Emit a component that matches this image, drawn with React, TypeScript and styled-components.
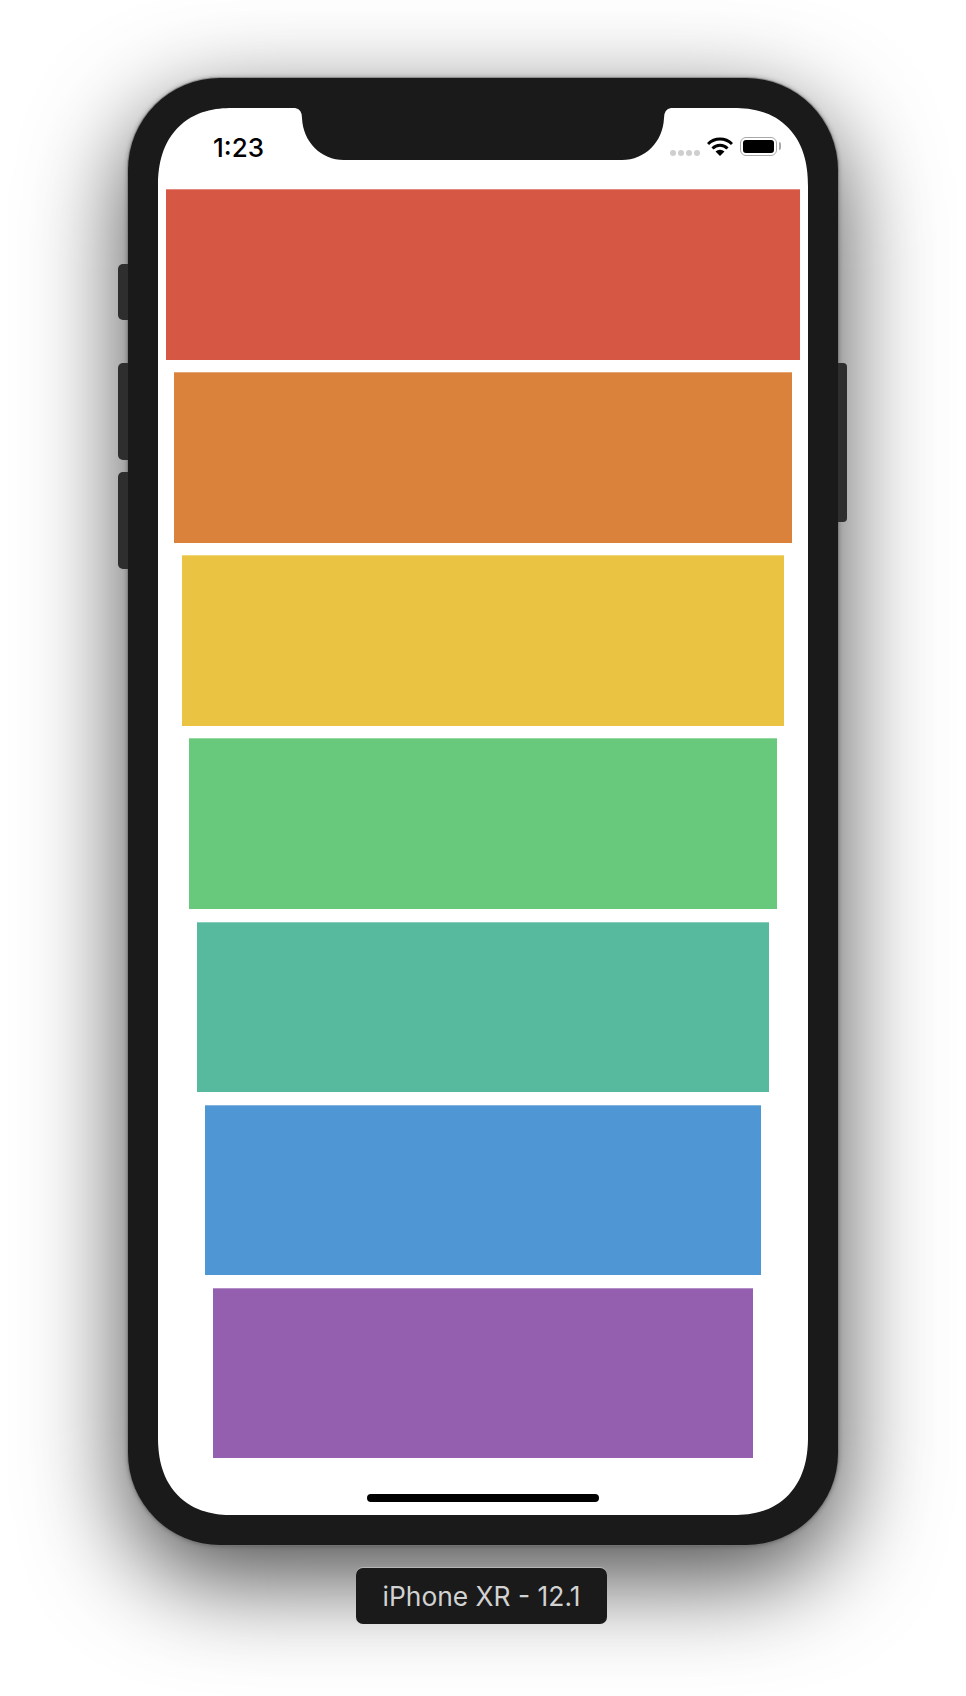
import React from "react";
import styled, { createGlobalStyle } from "styled-components";

const Global = createGlobalStyle`
  html, body { margin: 0; padding: 0; background: #fff; }
  body { font-family: Inter, "Liberation Sans", sans-serif; overflow: hidden; }
`;

const Page = styled.div`
  width: 966px;
  height: 1696px;
  padding-top: 78px;
  box-sizing: border-box;
  display: flex;
  flex-direction: column;
  align-items: center;
  overflow: hidden;
`;

const Device = styled.div`
  position: relative;
  width: 710px;
  height: 1467px;
  padding: 30px;
  box-sizing: border-box;
  display: flex;
  background: #1a1a1a;
  border-radius: 92px;
  box-shadow: 0 0 0 1px rgba(120, 120, 120, 0.6), 0 0 4px 1px rgba(0, 0, 0, 0.25),
    0 32px 100px rgba(0, 0, 0, 0.72);
`;

const SideButton = styled.div<{ $side: "left" | "right"; $top: number; $height: number }>`
  position: absolute;
  top: ${(p) => p.$top}px;
  height: ${(p) => p.$height}px;
  width: 10px;
  background: #2e2e2e;
  ${(p) =>
    p.$side === "left"
      ? "left: -10px; border-radius: 5px 0 0 5px;"
      : "right: -9px; width: 9px; border-radius: 0 4px 4px 0;"}
`;

const Screen = styled.div`
  position: relative;
  flex: 1;
  background: #fff;
  border-radius: 66px / 70px;
  overflow: hidden;
  display: flex;
  flex-direction: column;
  @supports (corner-shape: squircle) {
    border-radius: 74px / 78px;
    corner-shape: superellipse(1.2);
  }
`;

const NotchShape = styled.svg`
  position: absolute;
  top: 0;
  left: 134px;
  width: 382px;
  height: 52px;
`;

const StatusBar = styled.div`
  height: 81px;
  flex: none;
  box-sizing: border-box;
  padding: 25px 27px 0 55px;
  display: flex;
  justify-content: space-between;
  align-items: flex-start;
`;

const Time = styled.span`
  font-size: 26px;
  line-height: 30px;
  font-weight: 500;
  color: #000;
`;

const StatusIcons = styled.div`
  display: flex;
  align-items: flex-start;
  margin-top: 4px;
`;

const SignalDots = styled.div`
  display: flex;
  gap: 2px;
  margin-top: 13px;
  margin-right: 7px;
`;

const SignalDot = styled.span`
  width: 6px;
  height: 6px;
  border-radius: 50%;
  background: #cfcfcf;
`;

const WifiIcon = styled.svg`
  width: 26px;
  height: 19px;
  margin-right: 7px;
`;

const Battery = styled.div`
  position: relative;
  width: 37px;
  height: 19px;
  box-sizing: border-box;
  border: 1.5px solid #a8a8a8;
  border-radius: 6px;
  padding: 2px;
  display: flex;
  margin-right: 4px;
  &::after {
    content: "";
    position: absolute;
    right: -5px;
    top: 4px;
    width: 2px;
    height: 8px;
    background: #a8a8a8;
    border-radius: 0 2px 2px 0;
  }
`;

const BatteryFill = styled.div`
  flex: 1;
  background: #000;
  border-radius: 3px;
`;

const BarList = styled.div`
  flex: 1;
  display: flex;
  flex-direction: column;
  gap: 12.66px;
`;

const Bar = styled.div<{ $color: string; $inset: number }>`
  height: 170.5px;
  flex: none;
  margin: 0 ${(p) => p.$inset}px;
  background: ${(p) => p.$color};
  box-shadow: inset 0 1px 0 rgba(255, 255, 255, 0.3);
`;

const HomeIndicator = styled.div`
  flex: none;
  width: 232px;
  height: 8px;
  margin: 0 auto 13px;
  background: #000;
  border-radius: 4px;
`;

const DeviceLabel = styled.div`
  margin-top: 23px;
  margin-right: 3px;
  width: 251px;
  height: 56px;
  box-sizing: border-box;
  position: relative;
  display: flex;
  align-items: center;
  justify-content: center;
  background: #1a1a1a;
  border-radius: 7px;
  box-shadow: 0 -1px 0 rgba(255, 255, 255, 0.3);
  color: #d2d2d2;
  font-size: 26.4px;
  font-weight: 400;
`;

const bars = [
  { color: "#d75745", inset: 8 },
  { color: "#da813b", inset: 16 },
  { color: "#ebc343", inset: 24 },
  { color: "#68c97c", inset: 31 },
  { color: "#57b99d", inset: 39 },
  { color: "#4f96d5", inset: 47 },
  { color: "#945fae", inset: 55 },
];

export default function App() {
  return (
    <Page>
      <Global />
      <Device>
        <SideButton $side="left" $top={186} $height={56} />
        <SideButton $side="left" $top={285} $height={97} />
        <SideButton $side="left" $top={394} $height={97} />
        <SideButton $side="right" $top={285} $height={159} />
        <Screen>
          <NotchShape viewBox="0 0 382 52">
            <path
              d="M0 0 H3 Q10 1 10 10 C11 34 29 52 52 52 H330 C353 52 371 34 372 10 Q372 1 379 0 H382 Z"
              fill="#1a1a1a"
            />
          </NotchShape>
          <StatusBar>
            <Time>1:23</Time>
            <StatusIcons>
              <SignalDots>
                <SignalDot />
                <SignalDot />
                <SignalDot />
                <SignalDot />
              </SignalDots>
              <WifiIcon viewBox="0 0 26 19">
                <path d="M1 7 A17 17 0 0 1 25 7" fill="none" stroke="#000" strokeWidth="3" />
                <path d="M5.5 11.5 A10.5 10.5 0 0 1 20.5 11.5" fill="none" stroke="#000" strokeWidth="3" />
                <path d="M13 19 L8.5 14.6 A6.4 6.4 0 0 1 17.5 14.6 Z" fill="#000" />
              </WifiIcon>
              <Battery>
                <BatteryFill />
              </Battery>
            </StatusIcons>
          </StatusBar>
          <BarList>
            {bars.map((b) => (
              <Bar key={b.color} $color={b.color} $inset={b.inset} />
            ))}
          </BarList>
          <HomeIndicator />
        </Screen>
      </Device>
      <DeviceLabel>iPhone XR - 12.1</DeviceLabel>
    </Page>
  );
}
